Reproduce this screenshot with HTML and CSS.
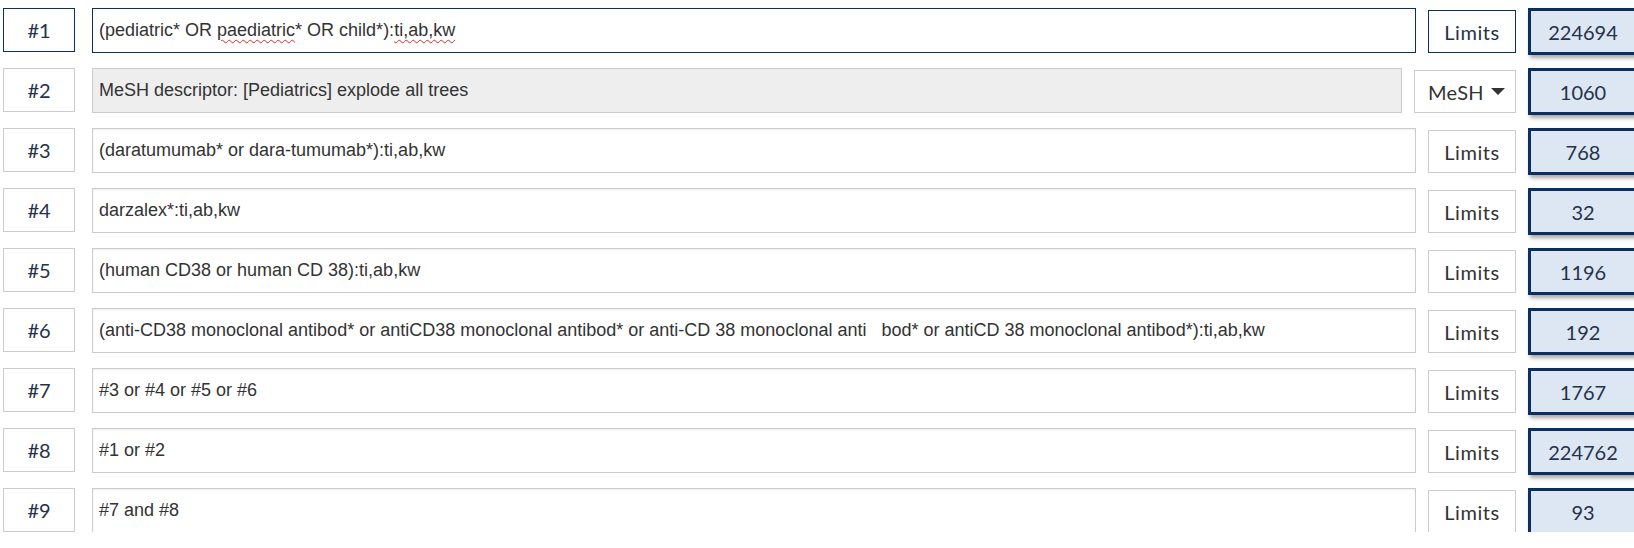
FILE: index.html
```html
<!DOCTYPE html>
<html>
<head>
<meta charset="utf-8">
<link rel="stylesheet" href="styles.css">
</head>
<body>
<div class="search">
  <div class="row">
    <div class="num focus">#1</div>
    <div class="query focus">(pediatric* OR <span class="sp">paediatric</span>* OR child*):<span class="sp">ti,ab,kw</span></div>
    <div class="btn focus">Limits</div>
    <div class="count">224694</div>
  </div>
  <div class="row">
    <div class="num">#2</div>
    <div class="query mesh">MeSH descriptor: [Pediatrics] explode all trees</div>
    <div class="btn meshbtn">MeSH<span class="caret"></span></div>
    <div class="count">1060</div>
  </div>
  <div class="row">
    <div class="num">#3</div>
    <div class="query">(daratumumab* or dara-tumumab*):ti,ab,kw</div>
    <div class="btn">Limits</div>
    <div class="count">768</div>
  </div>
  <div class="row">
    <div class="num">#4</div>
    <div class="query">darzalex*:ti,ab,kw</div>
    <div class="btn">Limits</div>
    <div class="count">32</div>
  </div>
  <div class="row">
    <div class="num">#5</div>
    <div class="query">(human CD38 or human CD 38):ti,ab,kw</div>
    <div class="btn">Limits</div>
    <div class="count">1196</div>
  </div>
  <div class="row">
    <div class="num">#6</div>
    <div class="query">(anti-CD38 monoclonal antibod* or antiCD38 monoclonal antibod* or anti-CD 38 monoclonal anti&nbsp;&nbsp;&nbsp;bod* or antiCD 38 monoclonal antibod*):ti,ab,kw</div>
    <div class="btn">Limits</div>
    <div class="count">192</div>
  </div>
  <div class="row">
    <div class="num">#7</div>
    <div class="query">#3 or #4 or #5 or #6</div>
    <div class="btn">Limits</div>
    <div class="count">1767</div>
  </div>
  <div class="row">
    <div class="num">#8</div>
    <div class="query">#1 or #2</div>
    <div class="btn">Limits</div>
    <div class="count">224762</div>
  </div>
  <div class="row">
    <div class="num">#9</div>
    <div class="query">#7 and #8</div>
    <div class="btn">Limits</div>
    <div class="count">93</div>
  </div>
</div>
</body>
</html>
```
FILE: styles.css
```css
html, body {
  margin: 0;
  padding: 0;
  background: #fff;
  overflow: hidden;
}

.search {
  width: 1635px;
  padding: 8px 0 0 3px;
  display: flex;
  flex-direction: column;
  gap: 16px;
}

.row {
  display: flex;
  align-items: flex-start;
  height: 44px;
}

.num {
  box-sizing: border-box;
  width: 72px;
  height: 44px;
  border: 1px solid #cccccc;
  display: flex;
  align-items: center;
  justify-content: center;
  font-family: "Lato", "Noto Sans", sans-serif;
  font-size: 20px;
  color: #25324a;
  flex: none;
}

.num.focus {
  border-color: #0b2f62;
}

.query {
  box-sizing: border-box;
  flex: 1;
  margin-left: 17px;
  height: 45px;
  border: 1px solid #cccccc;
  box-shadow: inset 0 1px 2px rgba(0, 0, 0, 0.08);
  padding: 0 6px;
  display: flex;
  align-items: center;
  font-family: "Liberation Sans", Arial, sans-serif;
  font-size: 18px;
  color: #333333;
  white-space: pre;
  background: #fff;
}

.query.focus {
  border-color: #0b2f62;
  box-shadow: none;
}

.query.mesh {
  background: #eeeeee;
  box-shadow: none;
}

.sp {
  text-decoration: underline wavy #e0262a;
  text-decoration-thickness: 1px;
  text-underline-offset: 3px;
}

.btn {
  box-sizing: border-box;
  flex: none;
  margin-left: 12px;
  margin-top: 2px;
  width: 88px;
  height: 43px;
  border: 1px solid #cccccc;
  display: flex;
  align-items: center;
  justify-content: center;
  font-family: "Lato", "Noto Sans", sans-serif;
  font-size: 20px;
  letter-spacing: 0.6px;
  color: #333333;
  background: #fff;
}

.btn.focus {
  border-color: #0b2f62;
  color: #25324a;
}

.meshbtn {
  width: 102px;
  justify-content: flex-start;
  padding-left: 13px;
  letter-spacing: 0.3px;
}

.caret {
  display: inline-block;
  margin-left: 7px;
  width: 0;
  height: 0;
  border-left: 7px solid transparent;
  border-right: 7px solid transparent;
  border-top: 7px solid #333333;
}

.count {
  box-sizing: border-box;
  flex: none;
  margin-left: 12px;
  width: 110px;
  height: 47px;
  border: 3px solid #0b2f62;
  background: #dde7f4;
  box-shadow: 2px 3px 4px rgba(0, 0, 0, 0.35);
  display: flex;
  align-items: center;
  justify-content: center;
  font-family: "Lato", "Noto Sans", sans-serif;
  font-size: 20px;
  color: #25324a;
}
```
